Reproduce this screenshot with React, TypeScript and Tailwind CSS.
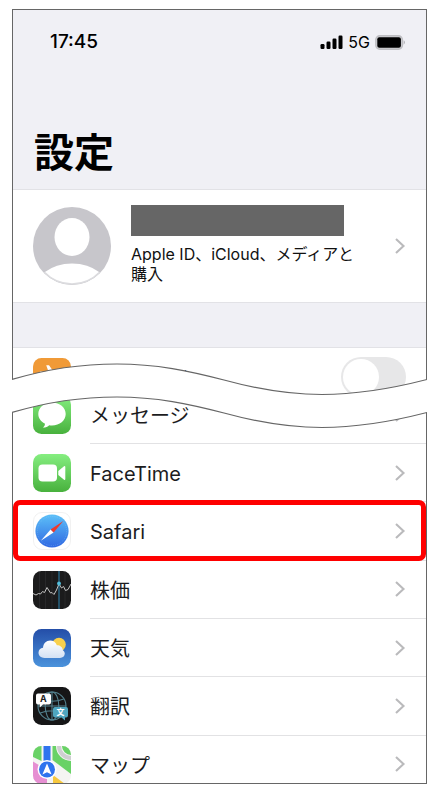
import { useState } from "react";
import type { ReactNode } from "react";

interface SettingsItem {
    id: string;
    label: string;
    icon: ReactNode;
    highlighted?: boolean;
}

const ITEMS: SettingsItem[] = [
    { id: "facetime", label: "FaceTime", icon: <FaceTimeIcon /> },
    { id: "safari", label: "Safari", icon: <SafariIcon />, highlighted: true },
    { id: "stocks", label: "株価", icon: <StocksIcon /> },
    { id: "weather", label: "天気", icon: <WeatherIcon /> },
    { id: "translate", label: "翻訳", icon: <TranslateIcon /> },
    { id: "maps", label: "マップ", icon: <MapsIcon /> },
];

export default function App() {
    const [airplane, setAirplane] = useState(false);

    return (
        <div className="bg-white pt-[9px] pr-4 pb-3 pl-3 font-['Inter','Noto_Sans_CJK_JP',sans-serif] text-[#1c1c1e]">
            <div className="border border-[#666] bg-white">

                {/* ── HEADER ── */}
                <header className="flex h-[180px] flex-col justify-between border-b border-[#e2e2e6] bg-[#f0f0f5] pt-5 pb-3 text-black">
                    <div className="flex h-6 items-center justify-between pr-5 pl-[37px]">
                        <span className="text-[19px] leading-6 font-medium">17:45</span>
                        <div className="flex items-center gap-[5px]">
                            <SignalIcon />
                            <span className="text-base leading-6">5G</span>
                            <BatteryIcon />
                        </div>
                    </div>
                    <h1 className="pl-[21px] text-[40px] leading-[48px] font-bold">設定</h1>
                </header>

                {/* ── APPLE ID ── */}
                <a href="#apple-id" className="flex h-[113px] items-center border-b border-[#e2e2e6] pr-5 pl-5">
                    <AvatarIcon />
                    <div className="ml-5 flex-1 pb-1">
                        <div className="h-[31px] w-[213px] bg-[#666]" />
                        <p className="mt-2 w-[240px] text-base leading-5 text-[#111]">
                            Apple ID、iCloud、メディアと
                            <br />
                            購入
                        </p>
                    </div>
                    <Chevron />
                </a>

                <div className="h-[45px] border-b border-[#e2e2e6] bg-[#f0f0f5]" />

                {/* ── TORN SECTION ── */}
                <div className="relative">
                    <label className="-mb-[21px] flex h-[58px] items-center gap-[19px] pr-5 pl-5">
                        <AirplaneIcon />
                        <span className="flex-1 pt-1 text-xl leading-6">機内モード</span>
                        <input
                            type="checkbox"
                            role="switch"
                            checked={airplane}
                            onChange={(e) => setAirplane(e.target.checked)}
                            className="h-10 w-[65px] appearance-none rounded-full bg-[#e7e7e8] p-[2px] before:block before:size-9 before:rounded-full before:bg-white checked:bg-green-500 checked:before:ml-auto"
                        />
                    </label>
                    <a href="#messages" className="flex h-[59px] items-center pl-5">
                        <MessagesIcon />
                        <RowBody label="メッセージ" />
                    </a>
                    <TearLine />
                </div>

                {/* ── APP LIST ── */}
                <div className="h-[339px] overflow-hidden">
                    <ul className="grid h-[350px] auto-rows-fr">
                        {ITEMS.map((item) => (
                            <SettingsRow key={item.id} item={item} />
                        ))}
                    </ul>
                </div>
            </div>
        </div>
    );
}

function SettingsRow({ item }: { item: SettingsItem }) {
    return (
        <li className="relative">
            <a href={`#${item.id}`} className="flex h-full items-center pl-5">
                {item.icon}
                <RowBody label={item.label} />
            </a>
            {item.highlighted && (
                <span className="pointer-events-none absolute inset-x-0 -top-[2px] bottom-0 rounded-[7px] border-5 border-[#fe0000]" />
            )}
        </li>
    );
}

function RowBody({ label }: { label: string }) {
    return (
        <span className="ml-[19px] flex h-full flex-1 items-center justify-between border-b border-[#e2e2e4] pr-5">
            <span className="pt-[3px] text-xl leading-6">{label}</span>
            <Chevron />
        </span>
    );
}

function Chevron() {
    return (
        <svg viewBox="0 0 12 18" className="h-[18px] w-3 shrink-0" fill="none" stroke="#bababc" strokeWidth="2.1">
            <path d="M2 2 L9.5 9 L2 16" />
        </svg>
    );
}

function TearLine() {
    return (
        <svg
            viewBox="0 0 415 96"
            preserveAspectRatio="none"
            className="pointer-events-none absolute top-0 -left-px h-24 w-[calc(100%+2px)]"
            fill="none"
            aria-hidden="true"
        >
            <path
                fill="#fff"
                d="M0 31.5 C35 21 70 16 105 16 C145 16 177 23 212 32 C245 41 275 46.5 310 46.5 C345 46.5 382 40 415 31.5 V64.5 C382 73 345 79.5 310 79.5 C275 79.5 245 74 212 65 C177 56 145 49 105 49 C70 49 35 54 0 64.5 Z"
            />
            <g stroke="#666" strokeWidth="1.2">
                <path d="M0 31.5 C35 21 70 16 105 16 C145 16 177 23 212 32 C245 41 275 46.5 310 46.5 C345 46.5 382 40 415 31.5" />
                <path d="M0 64.5 C35 54 70 49 105 49 C145 49 177 56 212 65 C245 74 275 79.5 310 79.5 C345 79.5 382 73 415 64.5" />
            </g>
        </svg>
    );
}

function SignalIcon() {
    return (
        <svg viewBox="0 0 23 14" className="h-[14px] w-[23px]" fill="#000">
            <rect x="0.5" y="9" width="4" height="5" rx="1.2" />
            <rect x="6.5" y="6.5" width="4" height="7.5" rx="1.2" />
            <rect x="12.5" y="3.5" width="4" height="10.5" rx="1.2" />
            <rect x="18.5" y="0.5" width="4" height="13.5" rx="1.2" />
        </svg>
    );
}

function BatteryIcon() {
    return (
        <svg viewBox="0 0 31 15" className="h-[15px] w-[31px]">
            <rect x="0.8" y="0.8" width="26.6" height="13.4" rx="4" fill="#d0d0d4" stroke="#bebec2" strokeWidth="1.4" />
            <rect x="2.3" y="2.3" width="23.6" height="10.4" rx="2" fill="#000" />
            <path d="M28.7 5.3 Q31 7.5 28.7 9.7 Z" fill="#aaaaae" />
        </svg>
    );
}

function AvatarIcon() {
    return (
        <svg viewBox="0 0 78 78" className="size-[78px] shrink-0">
            <circle cx="39" cy="39" r="39" fill="#c7c6cb" />
            <ellipse cx="39" cy="30" rx="17.5" ry="19" fill="#fff" />
            <path d="M11.5 65.3 Q23 56.5 39 56.5 Q55 56.5 66.5 65.3 A38 38 0 0 1 11.5 65.3 Z" fill="#fff" />
            <path d="M11.5 65.3 A38.3 38.3 0 0 0 66.5 65.3" fill="none" stroke="#dcdcdf" strokeWidth="1.4" />
        </svg>
    );
}

function AirplaneIcon() {
    return (
        <svg viewBox="0 0 38 38" className="size-[38px] shrink-0">
            <rect width="38" height="38" rx="8.5" fill="#f09a37" />
            <path
                fill="#fff"
                d="M32 19 C32 17.4 29.5 16.6 27 16.6 H22.6 L16 7.2 H13.2 L16.6 16.6 H11.3 L8.8 13.6 H6.8 L8.4 19 L6.8 24.4 H8.8 L11.3 21.4 H16.6 L13.2 30.8 H16 L22.6 21.4 H27 C29.5 21.4 32 20.6 32 19 Z"
            />
        </svg>
    );
}

function MessagesIcon() {
    return (
        <svg viewBox="0 0 38 38" className="size-[38px] shrink-0">
            <defs>
                <linearGradient id="messages-bg" x1="0" y1="0" x2="0" y2="1">
                    <stop offset="0" stopColor="#85ee80" />
                    <stop offset="1" stopColor="#48b13d" />
                </linearGradient>
            </defs>
            <rect width="38" height="38" rx="8.5" fill="url(#messages-bg)" />
            <path
                fill="#fff"
                d="M19 6.5 C11.3 6.5 5.3 11.6 5.3 18 C5.3 22 7.8 25.5 11.8 27.5 C12.2 29.2 11.3 30.6 9.8 31.6 C12.8 31.6 14.8 30.6 16.2 29.2 C17.1 29.4 18 29.5 19 29.5 C26.7 29.5 32.7 24.4 32.7 18 C32.7 11.6 26.7 6.5 19 6.5 Z"
            />
        </svg>
    );
}

function FaceTimeIcon() {
    return (
        <svg viewBox="0 0 38 38" className="size-[38px] shrink-0">
            <defs>
                <linearGradient id="facetime-bg" x1="0" y1="0" x2="0" y2="1">
                    <stop offset="0" stopColor="#85ee80" />
                    <stop offset="1" stopColor="#48b13d" />
                </linearGradient>
            </defs>
            <rect width="38" height="38" rx="8.5" fill="url(#facetime-bg)" />
            <rect x="5.5" y="10.5" width="18.5" height="17" rx="4" fill="#fff" />
            <path d="M25.3 17 L31 12.2 Q32.3 11.4 32.3 13 V25 Q32.3 26.6 31 25.8 L25.3 21 Z" fill="#fff" />
        </svg>
    );
}

function SafariIcon() {
    return (
        <svg viewBox="0 0 38 38" className="size-[38px] shrink-0">
            <defs>
                <linearGradient id="safari-bg" x1="0" y1="0" x2="0" y2="1">
                    <stop offset="0" stopColor="#5cc0f8" />
                    <stop offset="1" stopColor="#3068e2" />
                </linearGradient>
            </defs>
            <rect x="0.5" y="0.5" width="37" height="37" rx="8.5" fill="#fff" stroke="#f1f1f1" />
            <circle cx="19" cy="19" r="16.6" fill="url(#safari-bg)" />
            <circle cx="19" cy="19" r="14.6" fill="none" stroke="#9fd2fb" strokeWidth="1" strokeDasharray="0.5 1.4" opacity="0.5" />
            <path d="M7.8 28.8 L17.6 17.4 L20.6 20.4 Z" fill="#fff" />
            <path d="M30.3 9 L17.6 17.4 L20.6 20.4 Z" fill="#f0392b" />
        </svg>
    );
}

function StocksIcon() {
    return (
        <svg viewBox="0 0 38 38" className="size-[38px] shrink-0">
            <rect width="38" height="38" rx="8.5" fill="#1b1b1c" />
            <path d="M6.5 1 V37 M12.5 0 V38 M19 0 V38 M32 1 V37" stroke="#2c2c2e" strokeWidth="0.8" />
            <path d="M26 0 V38" stroke="#2a6f91" strokeWidth="1.3" />
            <path
                d="M0 22.5 L3 24 L5.5 22.5 L7.5 23 L9.5 20.5 L11.5 21.5 L14 16.5 L17.5 22 L19 21.5 L21 23.5 L23.5 19 L26 12.8 L28.5 17 L30.5 15.5 L32.5 19.5 L35 18.5 L38 13"
                fill="none"
                stroke="#c3c3c3"
                strokeWidth="1"
            />
            <circle cx="26" cy="12.5" r="1.9" fill="#52bfdc" />
        </svg>
    );
}

function WeatherIcon() {
    return (
        <svg viewBox="0 0 38 38" className="size-[38px] shrink-0">
            <defs>
                <linearGradient id="weather-bg" x1="0" y1="0" x2="0" y2="1">
                    <stop offset="0" stopColor="#244ea8" />
                    <stop offset="1" stopColor="#4b93dc" />
                </linearGradient>
                <linearGradient id="weather-cloud" x1="0" y1="0" x2="0" y2="1">
                    <stop offset="0" stopColor="#ffffff" />
                    <stop offset="1" stopColor="#d3e1f4" />
                </linearGradient>
            </defs>
            <rect width="38" height="38" rx="8.5" fill="url(#weather-bg)" />
            <circle cx="26" cy="15.5" r="6.8" fill="#f8d04c" />
            <path
                fill="url(#weather-cloud)"
                d="M11.5 29 C8 29 5.5 26.8 5.5 23.8 C5.5 21 7.5 19.2 10 18.8 C10.3 14.6 13.2 11.6 17.2 11.6 C20.4 11.6 22.8 13.3 23.9 16.2 C27.2 16.2 29.6 18.2 29.9 21.2 C31 21.9 31.8 23.2 31.8 24.6 C31.8 27.2 29.8 29 27 29 Z"
            />
        </svg>
    );
}

function TranslateIcon() {
    return (
        <svg viewBox="0 0 38 38" className="size-[38px] shrink-0">
            <rect width="38" height="38" rx="8.5" fill="#161617" />
            <g fill="none" stroke="#54828f" strokeWidth="1.1">
                <circle cx="19" cy="19" r="14" />
                <ellipse cx="19" cy="19" rx="6.8" ry="14" />
                <path d="M19 5 V33 M5 19 H33 M7.2 12 Q19 16.5 30.8 12 M7.2 26 Q19 21.5 30.8 26" />
            </g>
            <path d="M5 6.5 H16 Q18 6.5 18 8.5 V15.5 Q18 17.5 16 17.5 H10 L6.8 20.5 V17.5 H5 Q3 17.5 3 15.5 V8.5 Q3 6.5 5 6.5 Z" fill="#fff" />
            <path d="M22 20 H33 Q35 20 35 22 V28.5 Q35 30.5 33 30.5 H32 V33.5 L28.5 30.5 H22 Q20 30.5 20 28.5 V22 Q20 20 22 20 Z" fill="#4fa6bf" />
            <text x="10.4" y="15.3" textAnchor="middle" fontSize="9" fontWeight="700" fill="#222">A</text>
            <text x="27.5" y="28.3" textAnchor="middle" fontSize="8" fontWeight="700" fill="#fff">文</text>
        </svg>
    );
}

function MapsIcon() {
    return (
        <svg viewBox="0 0 38 38" className="size-[38px] shrink-0">
            <defs>
                <clipPath id="maps-clip">
                    <rect width="38" height="38" rx="8.5" />
                </clipPath>
            </defs>
            <g clipPath="url(#maps-clip)">
                <rect width="38" height="38" fill="#f4f4f2" />
                <path d="M0 0 H8.5 V15 L0 11 Z" fill="#69d266" />
                <path d="M0 15.5 L14 24 V38 H0 Z" fill="#e68fd2" />
                <path d="M19.5 0 H38 V28 L19.5 14 Z" fill="#69d266" />
                <path d="M20 29 L32 38 H20 Z" fill="#f7c83d" />
                <circle cx="38" cy="0" r="12" fill="none" stroke="#f4f4f2" strokeWidth="6" />
                <circle cx="38" cy="0" r="12" fill="none" stroke="#cfcfd1" strokeWidth="4" />
                <path d="M10.5 0 H17.5 V16 H10.5 Z" fill="#2f74ee" />
                <circle cx="14" cy="23.5" r="9.5" fill="#fff" />
                <circle cx="14" cy="23.5" r="8" fill="#2f74ee" />
                <path d="M14 17.5 L18.6 28.6 L14 26.2 L9.4 28.6 Z" fill="#fff" />
            </g>
        </svg>
    );
}
